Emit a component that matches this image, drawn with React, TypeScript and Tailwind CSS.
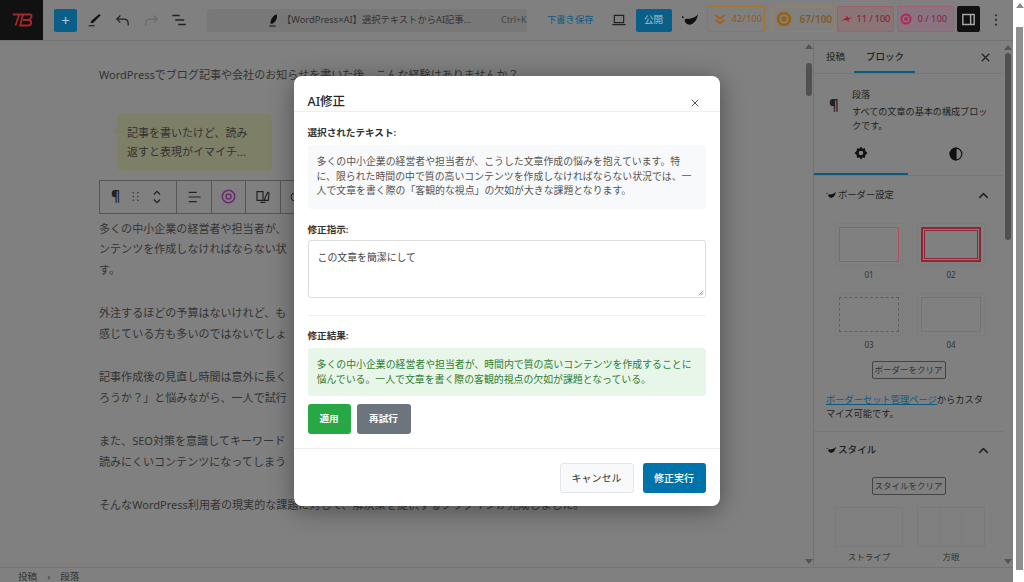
import React from "react";
import { ChevronUp, X } from "lucide-react";

const font = { fontFamily: '"Noto Sans", "Noto Sans CJK JP", sans-serif' };

function Leaf({ className }: { className?: string }) {
  return (
    <svg viewBox="0 0 24 16" className={className} fill="currentColor">
      <path d="M5 8c1 5 5 8 10 6 5-2 8-8 9-14-3 4-7 5-11 6-1 .3-2 .6-3 .6-2 0-3-1-5 1.400z" />
      <circle cx="2.500" cy="4" r="1.300" />
    </svg>
  );
}

function ScoreBadge({ label, className, children }: { label: string; className: string; children: React.ReactNode }) {
  return (
    <div className={`mb-[2px] flex h-[26px] shrink-0 items-center rounded-[2px] border whitespace-nowrap ${className}`}>
      {children}
      <span>{label}</span>
    </div>
  );
}

function Header() {
  return (
    <div className="flex h-[41px] shrink-0 items-center border-b border-[#737373] bg-[#808080]">
      <div className="flex h-[40px] w-[43px] shrink-0 items-center justify-center self-start bg-[#111111]">
        <svg viewBox="0 0 26 16" className="h-[16px] w-[24px]" fill="none" stroke="#a8252c" strokeWidth="2">
          <path d="M3 2h20M10 2L6 14M14 2l-3 12h8c3 0 4-1 4-3 0-2-1-3-3-3h-6M23 2c1 2 0 5-3 6" />
        </svg>
      </div>
      <button className="ml-[11px] flex h-[23px] w-[23px] shrink-0 items-center justify-center rounded-[2px] bg-[#0a5f88] text-[15px] leading-none text-[#b8ccd8]">
        +
      </button>
      <svg viewBox="0 0 24 24" className="ml-[9px] h-[16px] w-[16px] shrink-0" fill="#111">
        <path d="M20 3l2 2L11 16l-4 1 1-4L20 3zM4 20h9v1.500H4z" />
      </svg>
      <svg viewBox="0 0 24 24" className="ml-[12px] h-[17px] w-[17px] shrink-0" fill="none" stroke="#222" strokeWidth="1.800">
        <path d="M9 5L4 10l5 5M4 10h10c3 0 6 2 6 6v3" />
      </svg>
      <svg viewBox="0 0 24 24" className="ml-[12px] h-[17px] w-[17px] shrink-0" fill="none" stroke="#6b6b6b" strokeWidth="1.800">
        <path d="M15 5l5 5-5 5M20 10H10c-3 0-6 2-6 6v3" />
      </svg>
      <svg viewBox="0 0 24 24" className="ml-[10px] h-[18px] w-[18px] shrink-0" fill="none" stroke="#222" strokeWidth="1.800">
        <path d="M3 6h10M7 12h12M11 18h10" />
      </svg>
      <div className="ml-[19px] flex h-[23px] w-[320px] shrink-0 items-center rounded-[3px] bg-[#787878] text-[9.3px] text-[#333333]">
        <svg viewBox="0 0 24 24" className="ml-[58px] h-[15px] w-[15px] shrink-0" fill="#111">
          <path d="M19 2c1 6-1 12-7 15l-3 0c-1-5 3-13 10-15zM7 20h10v1.500H7z" />
        </svg>
        <span className="ml-[2px] w-[219px] shrink-0 whitespace-nowrap">【WordPress×AI】選択テキストからAI記事...</span>
        <span className="whitespace-nowrap text-[9px] text-[#444444]">Ctrl+K</span>
      </div>
      <span className="ml-[20px] shrink-0 whitespace-nowrap text-[9.3px] text-[#0d5a80]">下書き保存</span>
      <svg viewBox="0 0 24 24" className="ml-[17px] h-[16px] w-[16px] shrink-0" fill="none" stroke="#222" strokeWidth="1.800">
        <path d="M5 5h14v11H5zM2 19h20" />
      </svg>
      <button className="ml-[9px] h-[23px] w-[36px] shrink-0 rounded-[2px] bg-[#0a5f88] text-[9.5px] text-[#a8c0ce]">公開</button>
      <Leaf className="ml-[9px] h-[14px] w-[17px] shrink-0 text-[#111111]" />
      <ScoreBadge label="42/100" className="ml-[9px] w-[58px] border-[#a5732f] text-[9.5px] text-[#96571a]">
        <svg viewBox="0 0 24 24" className="mx-[6px] h-[16px] w-[12px]" fill="none" stroke="#a0601f" strokeWidth="4">
          <path d="M3 4l9 8 9-8M3 14l9 6 9-6" />
        </svg>
      </ScoreBadge>
      <ScoreBadge label="67/100" className="ml-[7px] w-[63px] border-[#968068] text-[10px] font-semibold text-[#805a28]">
        <svg viewBox="0 0 24 24" className="ml-[3px] mr-[8px] h-[16px] w-[16px]" fill="none" stroke="#99600f" strokeWidth="4">
          <circle cx="12" cy="12" r="9" />
          <circle cx="12" cy="12" r="2" fill="#99600f" />
        </svg>
      </ScoreBadge>
      <ScoreBadge label="11 / 100" className="ml-[2px] w-[57px] border-[#a06068] bg-[#8a7476] text-[9px] text-[#7c1c24]">
        <svg viewBox="0 0 24 16" className="ml-[3px] mr-[4px] h-[10px] w-[12px]" fill="#a81e28">
          <path d="M0 11l9-4 3-6 2 5 8-1-7 4 1 5-5-4z" />
        </svg>
      </ScoreBadge>
      <ScoreBadge label="0 / 100" className="ml-[3px] w-[57px] border-[#a06078] bg-[#8a7480] text-[9.3px] text-[#7c2440]">
        <svg viewBox="0 0 24 24" className="ml-[2px] mr-[6px] h-[12px] w-[12px]" fill="none" stroke="#b02858" strokeWidth="4">
          <circle cx="12" cy="12" r="9" />
          <circle cx="12" cy="12" r="2" />
        </svg>
      </ScoreBadge>
      <button className="mb-[2px] ml-[3px] flex h-[26px] w-[23px] shrink-0 items-center justify-center rounded-[2px] bg-[#111111]">
        <svg viewBox="0 0 24 24" className="h-[17px] w-[17px]" fill="none" stroke="#a8a8a8" strokeWidth="2">
          <path d="M4 5h16v14H4zM15 5v14" />
        </svg>
      </button>
      <svg viewBox="0 0 24 24" className="ml-[8px] h-[16px] w-[16px] shrink-0" fill="#333">
        <circle cx="12" cy="5" r="1.700" />
        <circle cx="12" cy="12" r="1.700" />
        <circle cx="12" cy="19" r="1.700" />
      </svg>
    </div>
  );
}

function BlockToolbar() {
  return (
    <div className="flex h-[34px] w-[195px] items-center overflow-hidden border-y border-l border-[#555555] text-[#222222]">
      <div className="flex h-full w-[77px] shrink-0 items-center border-r border-[#555555]">
        <span className="ml-[11px] text-[14px] font-bold">¶</span>
        <svg viewBox="0 0 12 16" className="ml-[11px] h-[13px] w-[9px]" fill="#333">
          <circle cx="3" cy="3" r="1" /><circle cx="9" cy="3" r="1" />
          <circle cx="3" cy="8" r="1" /><circle cx="9" cy="8" r="1" />
          <circle cx="3" cy="13" r="1" /><circle cx="9" cy="13" r="1" />
        </svg>
        <svg viewBox="0 0 16 24" className="ml-[12px] h-[18px] w-[10px]" fill="none" stroke="#222" strokeWidth="2">
          <path d="M3 8l5-5 5 5M3 16l5 5 5-5" />
        </svg>
      </div>
      <div className="flex h-full w-[35px] shrink-0 items-center justify-center border-r border-[#555555]">
        <svg viewBox="0 0 24 24" className="h-[16px] w-[16px]" fill="none" stroke="#222" strokeWidth="1.800">
          <path d="M4 5h12M4 12h18M4 19h12" />
        </svg>
      </div>
      <div className="flex h-full w-[34px] shrink-0 items-center justify-center border-r border-[#555555]">
        <svg viewBox="0 0 24 24" className="h-[15px] w-[15px]" fill="none" stroke="#6e2a70" strokeWidth="2.500">
          <circle cx="12" cy="12" r="10" />
          <circle cx="12" cy="12" r="4" />
        </svg>
      </div>
      <div className="flex h-full w-[35px] shrink-0 items-center justify-center border-r border-[#555555]">
        <svg viewBox="0 0 24 24" className="h-[16px] w-[16px]" fill="none" stroke="#222" strokeWidth="1.800">
          <path d="M3 4h9v13H3zM14 17l2-6 3-6 2 1-1 11zM8 20h8" />
        </svg>
      </div>
      <svg viewBox="0 0 24 24" className="ml-[8px] h-[16px] w-[12px] shrink-0" fill="none" stroke="#222" strokeWidth="2">
        <circle cx="12" cy="12" r="8" />
      </svg>
    </div>
  );
}

function EditorColumn() {
  return (
    <div className="relative flex-1 overflow-hidden">
      <div className="ml-[99px] text-[11.05px] leading-[20.5px] whitespace-nowrap text-[#333333]">
        <p className="mt-[24px]">WordPressでブログ記事や会社のお知らせを書いた後、こんな経験はありませんか？</p>
        <div className="relative ml-[18px] mt-[28px] flex h-[57px] w-[155px] items-center rounded-[5px] bg-[#7d7f66] pl-[10px] text-[11px] leading-[19.5px]">
          <span className="absolute -left-[4px] top-[13px] h-0 w-0 border-y-[4px] border-r-[4px] border-y-transparent border-r-[#7d7f66]" />
          <span>記事を書いたけど、読み<br />返すと表現がイマイチ...</span>
        </div>
        <div className="mt-[9px]">
          <BlockToolbar />
        </div>
        <p className="mt-[5px]">
          多くの中小企業の経営者や担当者が、<br />ンテンツを作成しなければならない状<br />す。
        </p>
        <p className="mt-[23px]">
          外注するほどの予算はないけれど、も<br />感じている方も多いのではないでしょ
        </p>
        <p className="mt-[23px]">
          記事作成後の見直し時間は意外に長く<br />ろうか？」と悩みながら、一人で試行
        </p>
        <p className="mt-[23px]">
          また、SEO対策を意識してキーワード<br />読みにくいコンテンツになってしまう
        </p>
        <p className="mt-[23px]">そんなWordPress利用者の現実的な課題に対して、解決策を提供するプラグインが完成しました。</p>
      </div>
    </div>
  );
}

function ScrollColumn({ thumb, className }: { thumb: string; className: string }) {
  return (
    <div className={`flex shrink-0 flex-col items-center ${className}`}>
      <span className="mt-[1px] h-0 w-0 border-x-[4px] border-b-[5px] border-x-transparent border-b-[#555555]" />
      <div className={`mt-[3px] w-[6px] rounded-full ${thumb}`} />
      <span className="mt-auto mb-[3px] h-0 w-0 border-x-[4px] border-t-[5px] border-x-transparent border-t-[#555555]" />
    </div>
  );
}

function BorderSample({ label, boxClass }: { label: string; boxClass: string }) {
  return (
    <div className="flex flex-col items-center">
      <div className="flex h-[43px] w-[68px] items-center justify-center border border-[#7c7c7c]">
        <div className={`h-[35px] w-[60px] ${boxClass}`} />
      </div>
      <span className="mt-[3px] text-[8px] leading-[12px] text-[#333333]">{label}</span>
    </div>
  );
}

function PanelTitle({ title, className }: { title: string; className: string }) {
  return (
    <div className="flex h-[20px] items-center pl-[12px] pr-[12px]">
      <Leaf className="h-[8px] w-[10px] text-[#111111]" />
      <span className={`ml-[2px] text-[#222222] ${className}`}>{title}</span>
      <ChevronUp className="ml-auto h-[15px] w-[15px] text-[#222222]" strokeWidth={2.4} />
    </div>
  );
}

function Sidebar() {
  return (
    <div className="flex w-[200px] shrink-0 overflow-hidden border-l border-[#737373]">
      <div className="w-[189px] shrink-0 overflow-hidden">
        <div className="flex h-[33px] items-center border-b border-[#767676] text-[9.5px] text-[#222222]">
          <span className="ml-[12px]">投稿</span>
          <div className="relative ml-[21px] flex h-full items-center">
            <span className="font-medium">ブロック</span>
            <span className="absolute -left-[12px] -right-[11px] bottom-0 h-[2px] bg-[#0d5a80]" />
          </div>
          <X className="ml-[75px] h-[13px] w-[13px]" strokeWidth={2.4} />
        </div>
        <div className="flex h-[56px] pl-[15px] pr-[12px] pt-[14px] text-[#222222]">
          <span className="mt-[6px] w-[23px] shrink-0 text-[15px] font-bold leading-[20px]">¶</span>
          <div className="text-[9.1px] leading-[14px]">
            <div>段落</div>
            <div className="mt-[3px]">すべての文章の基本の構成ブロックです。</div>
          </div>
        </div>
        <div className="mt-[3px] flex h-[43px] border-b border-[#767676] text-[#111111]">
          <div className="flex w-[94px] items-center justify-center border-b-2 border-[#0d5a80]">
            <svg viewBox="0 0 24 24" className="h-[14px] w-[14px]" fill="currentColor">
              <path fillRule="evenodd" d="M12 1l2.500 3.500 4.300-.5.500 4.300L23 12l-3.700 3.700-.5 4.300-4.300-.5L12 23l-2.500-3.500-4.300.5-.5-4.300L1 12l3.700-3.700.5-4.300 4.300.5L12 1zm0 7a4 4 0 100 8 4 4 0 000-8z" />
            </svg>
          </div>
          <div className="flex flex-1 items-center justify-center">
            <svg viewBox="0 0 24 24" className="h-[14px] w-[14px]" fill="none" stroke="currentColor" strokeWidth="2">
              <circle cx="12" cy="12" r="10" />
              <path d="M12 2a10 10 0 000 20z" fill="currentColor" />
            </svg>
          </div>
        </div>
        <div className="mt-[9px]">
          <PanelTitle title="ボーダー設定" className="text-[9.3px]" />
        </div>
        <div className="mt-[18px] grid grid-cols-2 justify-items-center gap-y-[12px] pl-[14px] pr-[11px]">
          <BorderSample label="01" boxClass="border border-[#b05060]" />
          <BorderSample label="02" boxClass="border-[2px] border-[#8e2638] outline outline-1 -outline-offset-4 outline-[#8e2638]" />
          <BorderSample label="03" boxClass="border border-dashed border-[#5e5e5e]" />
          <BorderSample label="04" boxClass="border border-[#747474]" />
        </div>
        <button className="mx-auto mt-[10px] block h-[18px] w-[74px] rounded-[2px] border border-[#444444] text-[8.5px] text-[#333333]">
          ボーダーをクリア
        </button>
        <p className="mt-[14px] px-[12px] text-[9.25px] leading-[14px] text-[#222222]">
          <span className="text-[#0d5a80] underline">ボーダーセット管理ページ</span>からカスタマイズ可能です。
        </p>
        <div className="mt-[10px] border-t border-[#767676] pt-[8px]">
          <PanelTitle title="スタイル" className="text-[9.6px] font-medium" />
        </div>
        <button className="mx-auto mt-[17px] block h-[18px] w-[74px] rounded-[2px] border border-[#444444] text-[8.5px] text-[#333333]">
          スタイルをクリア
        </button>
        <div className="mt-[12px] grid grid-cols-2 justify-items-center pl-[14px] pr-[11px] text-[8.5px] leading-[12px] text-[#333333]">
          <div className="flex flex-col items-center">
            <div className="h-[40px] w-[68px] border border-[#7a7a7a]" />
            <span className="mt-[4px]">ストライプ</span>
          </div>
          <div className="flex flex-col items-center">
            <div className="grid h-[40px] w-[68px] grid-cols-3 border border-[#7a7a7a]">
              <div className="border-r border-[#7c7c7c]" />
              <div className="border-r border-[#7c7c7c]" />
              <div />
            </div>
            <span className="mt-[4px]">方眼</span>
          </div>
        </div>
      </div>
      <ScrollColumn thumb="h-[187px] bg-[#505050]" className="w-[10px] pt-[3px]" />
    </div>
  );
}

function FieldLabel({ children }: { children: React.ReactNode }) {
  return <div className="text-[9.6px] font-semibold leading-[14px] text-[#333333]">{children}</div>;
}

function Modal() {
  return (
    <div className="flex h-[430px] w-[426px] flex-col rounded-[8px] bg-white shadow-[0_4px_24px_rgba(0,0,0,0.4)]">
      <div className="flex h-[36px] items-end justify-between border-b border-[#eeeeee] pl-[14px] pr-[19px]">
        <span className="text-[12.5px] font-medium leading-[18px] text-[#23282d]">AI修正</span>
        <X className="mb-[2px] h-[12px] w-[12px] text-[#555555]" strokeWidth={2} />
      </div>
      <div className="flex-1 px-[14px] pt-[14px]">
        <FieldLabel>選択されたテキスト:</FieldLabel>
        <div className="mt-[5px] h-[64px] rounded-[3px] bg-[#f8f9fa] px-[9px] pt-[9px] text-[9.9px] leading-[14.500px] text-[#555555]">
          多くの中小企業の経営者や担当者が、こうした文章作成の悩みを抱えています。特に、限られた時間の中で質の高いコンテンツを作成しなければならない状況では、一人で文章を書く際の「客観的な視点」の欠如が大きな課題となります。
        </div>
        <div className="mt-[14px]">
          <FieldLabel>修正指示:</FieldLabel>
        </div>
        <div className="relative mt-[3px] h-[58px] rounded-[3px] border border-[#dddddd] px-[9px] pt-[9px] text-[9.9px] leading-[14.500px] text-[#444444]">
          この文章を簡潔にして
          <svg viewBox="0 0 8 8" className="absolute bottom-[1px] right-[1px] h-[6px] w-[6px]" stroke="#777" fill="none">
            <path d="M1 7l6-6M4 7l3-3" />
          </svg>
        </div>
        <div className="mt-[17px] border-t border-[#f0f0f0] pt-[13px]">
          <FieldLabel>修正結果:</FieldLabel>
        </div>
        <div className="mt-[5px] h-[48px] rounded-[3px] bg-[#e8f5e9] px-[9px] pt-[9px] text-[9.9px] leading-[15px] text-[#2e7d32]">
          多くの中小企業の経営者や担当者が、時間内で質の高いコンテンツを作成することに悩んでいる。一人で文章を書く際の客観的視点の欠如が課題となっている。
        </div>
        <div className="mt-[8px] flex gap-[6px]">
          <button className="h-[30px] w-[43px] rounded-[3px] bg-[#28a745] text-[9.6px] font-semibold text-white">適用</button>
          <button className="h-[30px] w-[54px] rounded-[3px] bg-[#6c757d] text-[9.6px] font-semibold text-white">再試行</button>
        </div>
      </div>
      <div className="flex h-[58px] items-start justify-end gap-[9px] border-t border-[#eeeeee] px-[14px] pt-[14px]">
        <button className="h-[30px] w-[74px] rounded-[3px] border border-[#e4e6e8] bg-[#f8f9fa] text-[10px] text-[#333333]">キャンセル</button>
        <button className="h-[30px] w-[63px] rounded-[3px] bg-[#0073aa] text-[10px] font-medium text-white">修正実行</button>
      </div>
    </div>
  );
}

export default function App() {
  return (
    <div className="flex h-[582px] w-[1024px] overflow-hidden bg-white" style={font}>
      <div className="relative flex w-[1013px] shrink-0 flex-col bg-[#808080]">
        <Header />
        <div className="flex min-h-0 flex-1">
          <EditorColumn />
          <ScrollColumn thumb="mt-[14px] h-[33px] bg-[#505050]" className="w-[9px] pt-[2px]" />
          <Sidebar />
        </div>
        <div className="flex h-[15px] shrink-0 items-start border-t border-[#737373] pl-[18px] pt-[3px] text-[9.6px] leading-[11px] text-[#333333]">
          <span>投稿</span>
          <span className="mx-[10px]">›</span>
          <span>段落</span>
        </div>
        <div className="absolute inset-0 flex items-center justify-center">
          <Modal />
        </div>
      </div>
      <div className="ml-[3px] flex w-[7px] shrink-0 flex-col items-center">
        <span className="mt-[3px] h-0 w-0 border-x-[4px] border-b-[5px] border-x-transparent border-b-[#8a8a8a]" />
        <div className="mt-[19px] h-[543px] w-full bg-[#8f8f8f]" />
      </div>
    </div>
  );
}
